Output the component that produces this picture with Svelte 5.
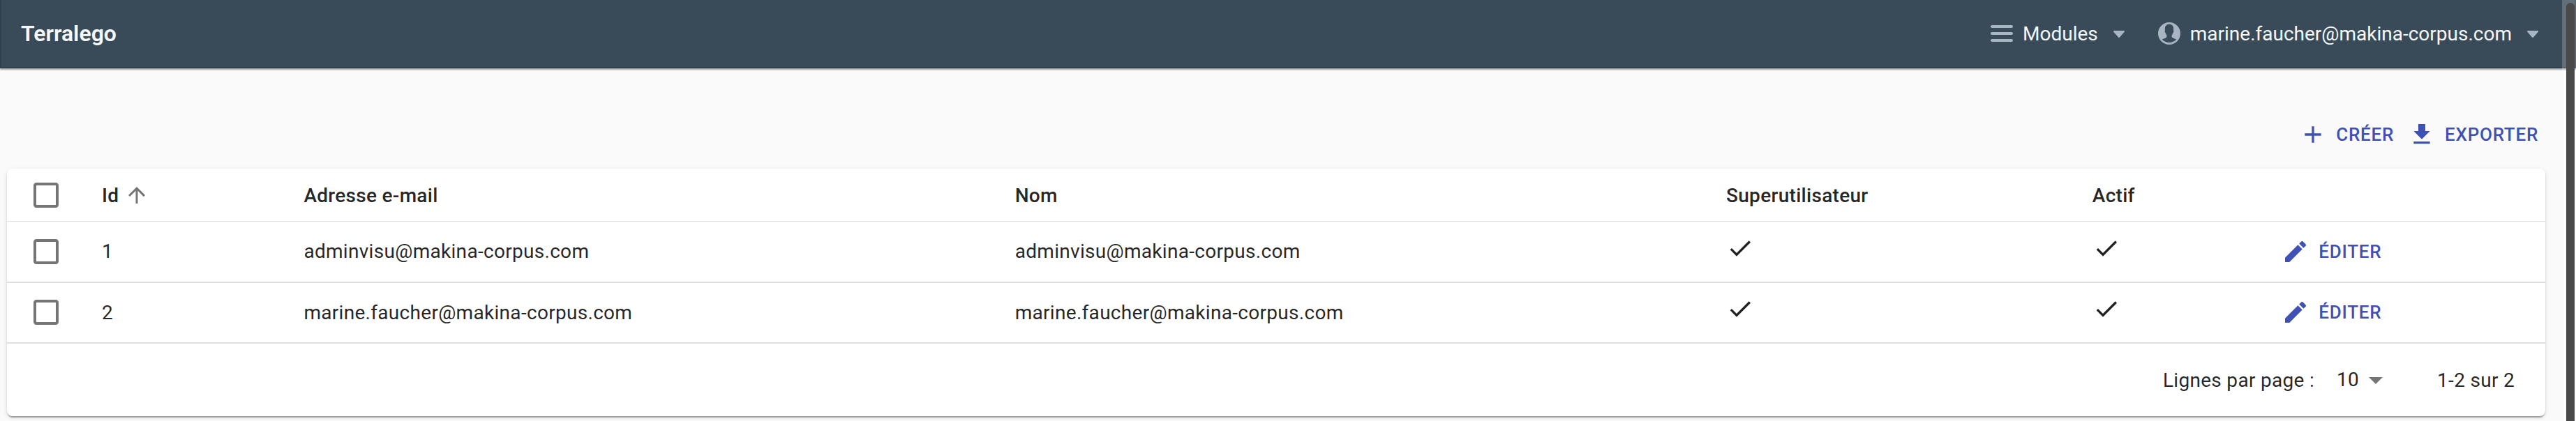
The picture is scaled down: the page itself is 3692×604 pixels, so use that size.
<script>
  const rows = [
    { id: 1, mail: 'adminvisu@makina-corpus.com' },
    { id: 2, mail: 'marine.faucher@makina-corpus.com' },
  ];
</script>

{#snippet box()}
  <svg class="i48" viewBox="0 0 24 24" fill="#757575"><path d="M19 5v14H5V5h14m0-2H5c-1.1 0-2 .9-2 2v14c0 1.1.9 2 2 2h14c1.1 0 2-.9 2-2V5c0-1.1-.9-2-2-2z" /></svg>
{/snippet}
{#snippet tick()}
  <svg class="i40 tick" viewBox="0 0 24 24" fill="currentColor"><path d="M9 16.2L4.8 12l-1.4 1.4L9 19 21 7l-1.4-1.4L9 16.2z" /></svg>
{/snippet}
{#snippet caret()}
  <svg class="i32" viewBox="0 0 16 16" fill="#a7b6c2"><path d="M12 6.5c0-.28-.22-.5-.5-.5h-7a.495.495 0 00-.37.83l3.5 4c.09.1.22.17.37.17s.28-.07.37-.17l3.5-4c.08-.09.13-.2.13-.33z" /></svg>
{/snippet}

<div class="page">
  <header>
    <div class="brand">Terralego</div>
    <div class="menu">
      <svg class="i32" viewBox="0 0 16 16" fill="#a7b6c2"><path d="M1 4h14c.55 0 1-.45 1-1s-.45-1-1-1H1c-.55 0-1 .45-1 1s.45 1 1 1zm14 8H1c-.55 0-1 .45-1 1s.45 1 1 1h14c.55 0 1-.45 1-1s-.45-1-1-1zm0-5H1c-.55 0-1 .45-1 1s.45 1 1 1h14c.55 0 1-.45 1-1s-.45-1-1-1z" /></svg>
      <span>Modules</span>
      {@render caret()}
    </div>
    <div class="menu">
      <svg class="i32" viewBox="0 0 16 16" fill="#a7b6c2" fill-rule="evenodd"><path d="M8 0a8 8 0 100 16A8 8 0 008 0zM8 1.4C6.100 1.400 4.900 2.700 4.900 4.500c0 .4.050.8.1 1.200-.3.200-.2.900 0 1.300.1.500.3.800.5.900.1.600.3 1 .7 1.500v1c-.3.900-1.600 1.100-3.300 1.800C4.200 13.600 6 14.500 8 14.500s3.800-.9 5.100-2.300c-1.700-.7-3-.9-3.300-1.800v-1c.4-.5.6-.9.7-1.500.2-.1.4-.4.5-.9.2-.4.3-1.100 0-1.300.05-.4.1-.8.1-1.200C11.100 2.700 9.900 1.400 8 1.400z" /></svg>
      <span>marine.faucher@makina-corpus.com</span>
      {@render caret()}
    </div>
  </header>

  <div class="actions">
    <button>
      <svg class="i40" viewBox="0 0 24 24" fill="currentColor"><path d="M19 13h-6v6h-2v-6H5v-2h6V5h2v6h6v2z" /></svg>
      <span>Créer</span>
    </button>
    <button>
      <svg class="i40" viewBox="0 0 24 24" fill="currentColor"><path d="M19 9h-4V3H9v6H5l7 7 7-7zM5 18v2h14v-2H5z" /></svg>
      <span>Exporter</span>
    </button>
  </div>

  <main>
    <div class="row head">
      <div class="check">{@render box()}</div>
      <div class="sort">
        <span class="text">Id</span>
        <svg class="i36" viewBox="0 0 24 24" fill="#757575"><path d="M4 12l1.410 1.410L11 7.830V20h2V7.830l5.580 5.590L20 12l-8-8-8 8z" /></svg>
      </div>
      <div class="text">Adresse e-mail</div>
      <div class="text">Nom</div>
      <div class="text">Superutilisateur</div>
      <div class="text">Actif</div>
      <div></div>
    </div>
    {#each rows as r}
      <div class="row">
        <div class="check">{@render box()}</div>
        <div class="text">{r.id}</div>
        <div class="text">{r.mail}</div>
        <div class="text">{r.mail}</div>
        <div>{@render tick()}</div>
        <div>{@render tick()}</div>
        <div>
          <button>
            <svg class="i40" viewBox="0 0 24 24" fill="currentColor"><path d="M3 17.250V21h3.750L17.810 9.940l-3.750-3.750L3 17.250zM20.710 7.040c.39-.39.39-1.020 0-1.410l-2.340-2.340c-.39-.39-1.020-.39-1.410 0l-1.830 1.830 3.750 3.750 1.830-1.830z" /></svg>
            <span>Éditer</span>
          </button>
        </div>
      </div>
    {/each}
    <footer>
      <span class="label">Lignes par page :</span>
      <span class="select">10
        <svg class="i48" viewBox="0 0 24 24" fill="#757575"><path d="M7 10l5 5 5-5z" /></svg>
      </span>
      <span class="label">1-2 sur 2</span>
    </footer>
  </main>

  <div class="track"><div class="thumb"></div></div>
</div>

<style>
  :global(body) { margin: 0; overflow: hidden; }
  .page {
    position: relative;
    display: flow-root;
    width: 3692px;
    height: 604px;
    overflow: hidden;
    background: #fafafa;
    color: rgba(0, 0, 0, 0.87);
    font: 28px/40px Roboto, sans-serif;
  }
  svg { display: block; flex: none; }
  .i32 { width: 32px; height: 32px; }
  .i36 { width: 36px; height: 36px; }
  .i40 { width: 40px; height: 40px; }
  .i48 { width: 48px; height: 48px; }
  header {
    display: flex;
    align-items: center;
    box-sizing: border-box;
    height: 100px;
    margin-top: -2px;
    padding: 0 46px 0 30px;
    background: #394b59;
    color: #f5f8fa;
    box-shadow: inset 0 0 0 2px rgba(16, 22, 26, 0.2), 0 2px 2px rgba(16, 22, 26, 0.4);
  }
  .brand { flex: 1; font-size: 32px; font-weight: 600; }
  .menu { display: flex; align-items: center; gap: 14px; margin-left: 40px; }
  .menu span { padding-top: 2px; }
  .actions {
    display: flex;
    justify-content: flex-end;
    gap: 20px;
    padding: 75px 54px 0 0;
    height: 69px;
  }
  button {
    display: flex;
    align-items: center;
    gap: 13px;
    height: 40px;
    padding: 0;
    border: 0;
    background: none;
    color: #3f51b5;
    font: 500 26px/40px Roboto, sans-serif;
    letter-spacing: 0.02857em;
    text-transform: uppercase;
  }
  main {
    width: 3638px;
    height: 355px;
    margin-left: 10px;
    border-radius: 8px;
    background: #fff;
    letter-spacing: 0.01071em;
    box-shadow: 0 4px 2px -2px rgba(0, 0, 0, 0.2), 0 2px 2px 0 rgba(0, 0, 0, 0.14), 0 2px 6px 0 rgba(0, 0, 0, 0.12);
  }
  .row {
    display: grid;
    grid-template-columns: 136px 289.4px 1019.3px 1019.3px 524.8px 271.5px 1fr;
    align-items: center;
    box-sizing: border-box;
    height: 88px;
    border-bottom: 2px solid #e0e0e0;
  }
  .row + .row + .row { height: 87px; padding-bottom: 1px; }
  .row + .row + .row .text { padding-top: 2px; }
  .head { height: 76px; padding-top: 1px; border-bottom-width: 1px; font-weight: 500; }
  .head .text { padding-top: 2px; }
  .check { padding-left: 32px; }
  .tick { margin-bottom: 10px; }
  .sort { display: flex; align-items: center; gap: 8px; }
  footer {
    display: flex;
    align-items: center;
    justify-content: flex-end;
    height: 104px;
    padding-right: 44px;
  }
  .label { padding-top: 2px; }
  .select { display: flex; align-items: center; margin: 0 64px 0 32px; }
  .track {
    position: absolute;
    top: 0;
    right: 0;
    width: 20px;
    height: 604px;
    background: rgba(255, 255, 255, 0.2);
  }
  .thumb { height: 620px; margin: 0 2px 0 6px; border-radius: 6px; background: #494949; position: relative; top: 4px; }
</style>
